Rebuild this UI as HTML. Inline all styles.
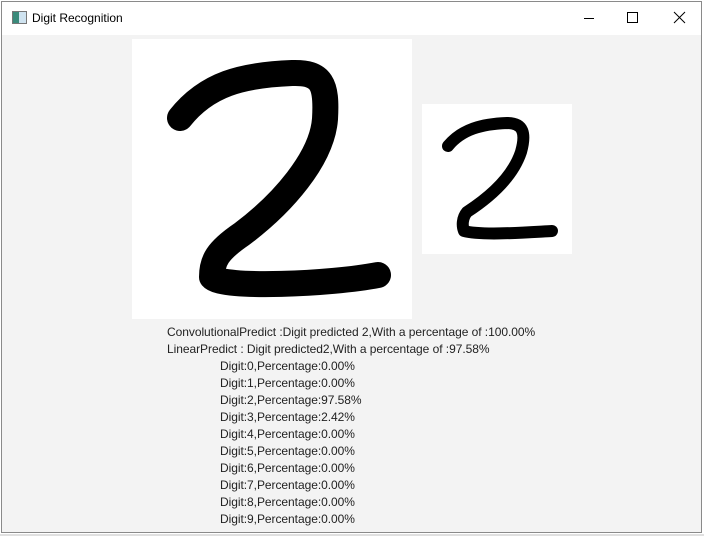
<!DOCTYPE html>
<html><head><meta charset="utf-8"><style>
html,body{margin:0;padding:0;width:704px;height:536px;overflow:hidden;background:#fff;font-family:"Liberation Sans",sans-serif}
.win{position:absolute;left:1px;top:1px;width:701px;height:532px;border:1px solid #8a8a8a;box-sizing:border-box;background:#f3f3f3}
.title{position:absolute;left:0;top:0;right:0;height:33px;background:#fff}
.title .t{position:absolute;left:30px;top:9px;font-size:12px;color:#000}
.icon{position:absolute;left:10px;top:9px;width:13px;height:11px;border:1px solid #777;background:linear-gradient(90deg,#3a8a7a 0 45%,#cfe3f0 45%)}
.ctl{position:absolute;top:0;height:33px;width:46px}
.txt{position:absolute;font-size:12px;color:#222;white-space:nowrap;letter-spacing:-0.05px;line-height:17px}
.strip{position:absolute;left:0;top:534px;width:704px;height:2px;background:#e0e0e0}
</style></head><body>
<div class="win">
 <div class="title">
  <div class="icon"></div>
  <div class="t">Digit Recognition</div>
  <svg class="ctl" style="left:564px" viewBox="0 0 46 33"><line x1="18" y1="16.5" x2="28" y2="16.5" stroke="#000" stroke-width="1"/></svg>
  <svg class="ctl" style="left:607px" viewBox="0 0 46 33"><rect x="18.5" y="10.5" width="10" height="10" fill="none" stroke="#000" stroke-width="1"/></svg>
  <svg class="ctl" style="left:655px" viewBox="0 0 46 33"><path d="M17 10L28 21M28 10L17 21" stroke="#000" stroke-width="1"/></svg>
 </div>
</div>
<svg style="position:absolute;left:132px;top:39px" width="280" height="280" viewBox="0 0 280 280">
 <rect width="280" height="280" fill="#fff"/>
 <path d="M48,79 C75,45 110,36 160,34 C190,33 195,45 193,80 C190,120 150,165 110,195 C85,212 80,222 80,238 C90,250 200,245 246,236" fill="none" stroke="#000" stroke-width="26" stroke-linecap="round" stroke-linejoin="round"/>
</svg>
<svg style="position:absolute;left:422px;top:104px" width="150" height="150" viewBox="0 0 150 150">
 <rect width="150" height="150" fill="#fff"/>
 <path d="M26,42 C40,25 60,20 85,19 C102,19 104,30 99,48 C90,75 65,95 45,108 C40,114 40,122 42,127 C60,132 110,128 130,127" fill="none" stroke="#000" stroke-width="12" stroke-linecap="round" stroke-linejoin="round"/>
</svg>
<div class="txt" style="left:167px;top:324px">ConvolutionalPredict :Digit predicted 2,With a percentage of :100.00%</div>
<div class="txt" style="left:167px;top:341px">LinearPredict : Digit predicted2,With a percentage of :97.58%</div>
<div class="txt" style="left:220px;top:358px">Digit:0,Percentage:0.00%<br>Digit:1,Percentage:0.00%<br>Digit:2,Percentage:97.58%<br>Digit:3,Percentage:2.42%<br>Digit:4,Percentage:0.00%<br>Digit:5,Percentage:0.00%<br>Digit:6,Percentage:0.00%<br>Digit:7,Percentage:0.00%<br>Digit:8,Percentage:0.00%<br>Digit:9,Percentage:0.00%</div>
<div class="strip"></div>
</body></html>
